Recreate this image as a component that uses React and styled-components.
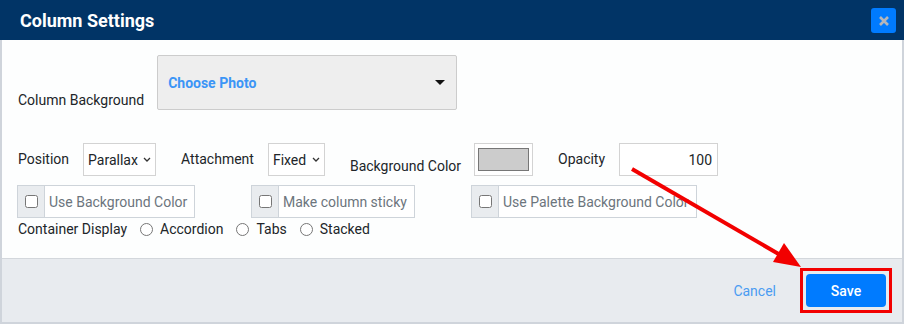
import styled, { createGlobalStyle } from "styled-components";

const GlobalStyle = createGlobalStyle`
  *, *::before, *::after {
    box-sizing: border-box;
  }
  html, body {
    margin: 0;
    padding: 0;
    background: #ffffff;
  }
  body {
    font-family: Roboto, "Liberation Sans", Arial, sans-serif;
    font-size: 14px;
    color: #212529;
  }
`;

function Chevron() {
  return (
    <svg width="8" height="5" viewBox="0 0 8 5">
      <path d="M1 1 L4 4 L7 1" fill="none" stroke="#333" strokeWidth="1.3" />
    </svg>
  );
}

function App() {
  return (
    <>
      <GlobalStyle />
      <Modal>
        <Header>
          <Title>Column Settings</Title>
          <CloseButton aria-label="close">
            <svg width="12" height="12" viewBox="0 0 12 12">
              <path d="M2 2 L10 10 M10 2 L2 10" stroke="#b4b6ba" strokeWidth="2.6" />
            </svg>
          </CloseButton>
        </Header>

        <Body>
          <PhotoRow>
            <Label>Column Background</Label>
            <PhotoSelect>
              <PhotoText>Choose Photo</PhotoText>
              <Caret />
            </PhotoSelect>
          </PhotoRow>

          <FieldRow>
            <Field>
              <Label>Position</Label>
              <SelectBox $width={73}>
                Parallax <Chevron />
              </SelectBox>
            </Field>
            <Field>
              <Label>Attachment</Label>
              <SelectBox $width={57}>
                Fixed <Chevron />
              </SelectBox>
            </Field>
            <Field $gap={13}>
              <Label $low>Background Color</Label>
              <ColorBox>
                <Swatch />
              </ColorBox>
            </Field>
            <Field>
              <Label>Opacity</Label>
              <NumberInput>100</NumberInput>
            </Field>
          </FieldRow>

          <CheckRow>
            <InputGroup $width={178}>
              <Addon>
                <input type="checkbox" />
              </Addon>
              <GroupText>Use Background Color</GroupText>
            </InputGroup>
            <InputGroup $width={164}>
              <Addon>
                <input type="checkbox" />
              </Addon>
              <GroupText>Make column sticky</GroupText>
            </InputGroup>
            <InputGroup $width={226}>
              <Addon>
                <input type="checkbox" />
              </Addon>
              <GroupText>Use Palette Background Color</GroupText>
            </InputGroup>
          </CheckRow>

          <RadioRow>
            <Label>Container Display</Label>
            <RadioOption>
              <input type="radio" name="display" /> Accordion
            </RadioOption>
            <RadioOption>
              <input type="radio" name="display" /> Tabs
            </RadioOption>
            <RadioOption>
              <input type="radio" name="display" /> Stacked
            </RadioOption>
          </RadioRow>
        </Body>

        <Footer>
          <CancelLink>Cancel</CancelLink>
          <Highlight>
            <SaveButton>Save</SaveButton>
          </Highlight>
        </Footer>

        <ArrowLayer width="904" height="324" viewBox="0 0 904 324">
          <line x1="632" y1="169" x2="782" y2="256" stroke="#f20000" strokeWidth="4" />
          <polygon points="801,267 773,262 784,243" fill="#f20000" />
        </ArrowLayer>
      </Modal>
    </>
  );
}

const Modal = styled.div`
  position: relative;
  width: 904px;
  height: 324px;
  display: flex;
  flex-direction: column;
  background: #fdfefe;
  border: 2px solid #cfd4db;
  border-top: none;
`;

const Header = styled.header`
  height: 40px;
  margin: 0 -2px;
  padding: 0 8px 0 20px;
  display: flex;
  align-items: center;
  justify-content: space-between;
  background: #013466;
`;

const Title = styled.h1`
  margin: 0;
  font-size: 18px;
  font-weight: 700;
  color: #ffffff;
`;

const CloseButton = styled.button`
  width: 25px;
  height: 25px;
  margin-top: 1px;
  padding: 0;
  border: none;
  border-radius: 3px;
  background: #007bff;
  display: flex;
  align-items: center;
  justify-content: center;
`;

const Body = styled.main`
  flex: 1;
  padding: 15px 15px 0 15px;
  display: flex;
  flex-direction: column;
`;

const Label = styled.span`
  font-size: 14px;
  color: #212529;
  white-space: nowrap;
  line-height: ${(p) => (p.$low ? "18px" : "33px")};
  align-self: ${(p) => (p.$low ? "flex-end" : "auto")};
  margin-bottom: ${(p) => (p.$low ? "1px" : "0")};
`;

const PhotoRow = styled.div`
  display: flex;
  align-items: flex-end;
  gap: 13px;
  padding-left: 1px;

  & > span {
    line-height: 18px;
    margin-bottom: 1px;
  }
`;

const PhotoSelect = styled.div`
  width: 300px;
  height: 55px;
  padding: 0 10px;
  display: flex;
  align-items: center;
  justify-content: space-between;
  background: #eeeeee;
  border: 1px solid #cccccc;
  border-radius: 2px;
`;

const PhotoText = styled.span`
  font-weight: 700;
  color: #3b95f6;
`;

const Caret = styled.span`
  width: 0;
  height: 0;
  margin-right: 1px;
  border-left: 5px solid transparent;
  border-right: 5px solid transparent;
  border-top: 5px solid #111;
`;

const FieldRow = styled.div`
  margin-top: 33px;
  padding-left: 1px;
  display: flex;
  align-items: flex-start;
  gap: 25px;
`;

const Field = styled.div`
  height: 33px;
  display: flex;
  gap: ${(p) => p.$gap || 14}px;
`;

const SelectBox = styled.div`
  width: ${(p) => p.$width}px;
  height: 33px;
  padding: 0 4px 0 4px;
  display: flex;
  align-items: center;
  justify-content: space-between;
  border: 1px solid #d3d3d3;
  background: #ffffff;
  color: #212529;
  font-size: 14px;
`;

const ColorBox = styled.div`
  width: 59px;
  height: 33px;
  padding: 4px 3px;
  border: 1px solid #d3d3d3;
  background: #ffffff;
`;

const Swatch = styled.div`
  width: 100%;
  height: 100%;
  background: #cccccc;
  border: 1px solid #767676;
`;

const NumberInput = styled.div`
  width: 99px;
  height: 33px;
  padding: 0 5px;
  display: flex;
  align-items: center;
  justify-content: flex-end;
  border: 1px solid #d3d3d3;
  background: #ffffff;
`;

const CheckRow = styled.div`
  margin-top: 9px;
  display: flex;
  gap: 56px;
`;

const InputGroup = styled.div`
  width: ${(p) => p.$width}px;
  height: 33px;
  display: flex;
  border: 1px solid #ced4da;
  overflow: hidden;
`;

const Addon = styled.div`
  width: 27px;
  display: flex;
  align-items: center;
  justify-content: center;
  background: #e9ecef;
  border-right: 1px solid #ced4da;

  input {
    margin: 0;
    width: 13px;
    height: 13px;
  }
`;

const GroupText = styled.span`
  flex: 1;
  padding-left: 4px;
  display: flex;
  align-items: center;
  color: #6c757d;
  white-space: nowrap;
  background: #ffffff;
`;

const RadioRow = styled.div`
  margin-top: 1px;
  padding-left: 1px;
  display: flex;
  align-items: center;
  gap: 13px;
  height: 20px;

  & > span {
    line-height: 20px;
  }
`;

const RadioOption = styled.label`
  display: flex;
  align-items: center;
  gap: 7px;

  input {
    margin: 0;
    width: 13px;
    height: 13px;
  }
`;

const Footer = styled.footer`
  height: 64px;
  padding-right: 10px;
  display: flex;
  align-items: center;
  justify-content: flex-end;
  gap: 24px;
  background: #e8ebef;
  border-top: 1px solid #d3d7dc;
`;

const CancelLink = styled.a`
  color: #4a9cf2;
  font-size: 14px;
  cursor: pointer;
`;

const Highlight = styled.div`
  padding: 3px;
  border: 3px solid #f20000;
`;

const SaveButton = styled.button`
  width: 80px;
  height: 33px;
  border: none;
  border-radius: 4px;
  background: #007bff;
  color: #ffffff;
  font-family: Roboto, "Liberation Sans", Arial, sans-serif;
  font-size: 14px;
  font-weight: 500;
  display: block;
`;

const ArrowLayer = styled.svg`
  position: absolute;
  top: 0;
  left: -2px;
  pointer-events: none;
`;

export default App;
